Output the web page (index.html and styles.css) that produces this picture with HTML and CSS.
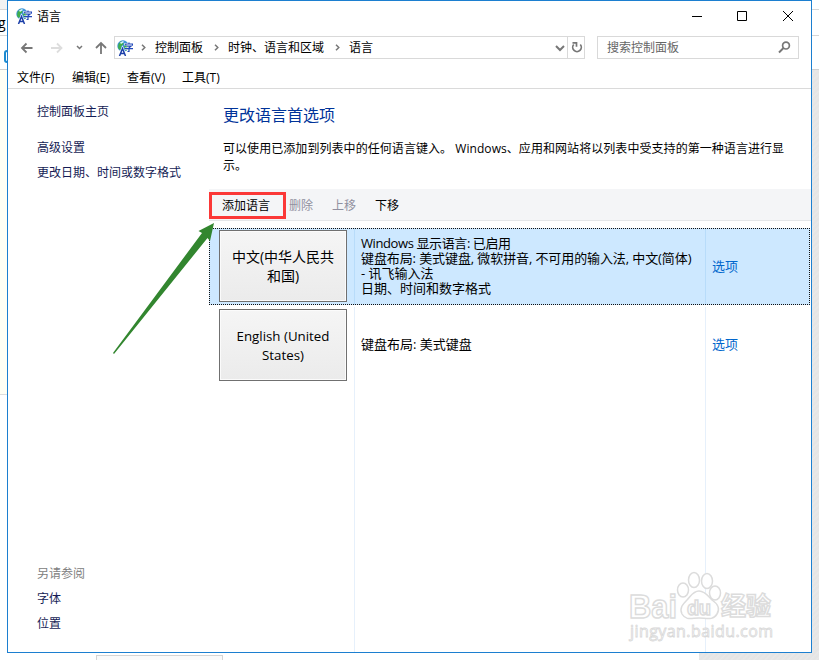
FILE: index.html
```
<!DOCTYPE html>
<html lang="zh-CN">
<head>
<meta charset="utf-8">
<title>语言</title>
<link rel="stylesheet" href="styles.css">
</head>
<body>
<svg width="0" height="0" class="defs">
<symbol id="lang" viewBox="0 0 16 16">
<circle cx="6" cy="6" r="5.700" fill="#3c93d8"/>
<path d="M1.500 4 4 1.200 6.500 3 6 5 4 6l.5 3L3 10 1 8zM7 6l3-2 1 5-2 2z" fill="#3fae4c"/>
<path d="M3 2.500 6 1l1 1-3 2z" fill="#d8f3ff"/>
<path d="M2.500 15.500 5.500 8.500l3 7M3.500 13h4" fill="none" stroke="#fff" stroke-width="2.600"/>
<path d="M2.500 16 5.500 8.500l3 7.500M3.500 13.500h4" fill="none" stroke="#1a3ea8" stroke-width="1.500"/>
<path d="M8.500 5.500V4h7v1.500M12 2.500V4M9.800 6.200h4.200L12 7.800V11.500h-1.500M8 8.600h8" fill="none" stroke="#fff" stroke-width="2.200"/>
<path d="M8.700 5.500V4h6.800v1.500M12 2.500V4M9.800 6.200h4.200L12 7.800V11.500h-1.500M8 8.600h8" fill="none" stroke="#2148b9" stroke-width="1.200"/>
</symbol>
<symbol id="sep" viewBox="0 0 5 7"><path d="M1 .7 3.800 3.500 1 6.300" fill="none" stroke="#777" stroke-width="1.500"/></symbol>
</svg>
<div class="behind">
<div class="behind-left"><div class="b-tab"></div><div class="b-addr">g</div><div class="b-tools"><i></i></div><div class="b-page"></div></div>
<div class="behind-right"><div class="b-tab"></div><div class="b-addr"></div><div class="b-tools"></div><div class="b-grain"></div></div>
<div class="behind-bottom"><div class="b-box"></div><div class="b-grain"></div></div>
</div>

<div class="window">
<div class="titlebar">
<svg class="lang"><use href="#lang"/></svg>
<span class="title">语言</span>
<svg class="controls" width="104" height="12" viewBox="0 0 104 12" fill="none" stroke="#000"><path d="M0 6.500h10M45.500 1.500h9v9h-9zM91 1l10 10M101 1 91 11"/></svg>
</div>

<div class="navbar">
<svg class="arrows" width="90" height="16" viewBox="0 0 90 16" fill="none" stroke-width="1.800">
<path d="M13.500 8H3M7.500 3.500 3 8l4.500 4.500" stroke="#777"/>
<path d="M32 8h10.500M38 3.500 42.500 8 38 12.500" stroke="#ddd"/>
<path d="m58 6 2.500 2.500L63 6" stroke="#777" stroke-width="1.500"/>
<path d="M82 14V3M77 8l5-5 5 5" stroke="#777"/>
</svg>
<div class="address">
<svg class="lang"><use href="#lang"/></svg>
<svg class="sep"><use href="#sep"/></svg><span class="crumb c1">控制面板</span>
<svg class="sep"><use href="#sep"/></svg><span class="crumb c2">时钟、语言和区域</span>
<svg class="sep"><use href="#sep"/></svg><span class="crumb">语言</span>
<svg class="drop" width="10" height="8" viewBox="0 0 10 8"><path d="m1 2 4 4 4-4" fill="none" stroke="#777" stroke-width="2"/></svg>
<div class="refresh"><svg width="12" height="12" viewBox="0 0 12 12" fill="none" stroke="#777" stroke-width="1.700"><path d="M9.300 3.500A4.300 4.300 0 1 1 2.700 3.500M1.500 1.800h4v4"/></svg></div>
</div>
<div class="search">搜索控制面板<svg width="13" height="13" viewBox="0 0 13 13" fill="none" stroke="#777"><circle cx="8" cy="4.600" r="3.400" stroke-width="1.700"/><path d="M5.500 7 1 11.500" stroke-width="2"/></svg></div>
</div>

<div class="menubar"><span>文件(F)</span><span>编辑(E)</span><span>查看(V)</span><span>工具(T)</span></div>

<div class="body">
<div class="side">
<a class="home">控制面板主页</a>
<a>高级设置</a>
<a>更改日期、时间或数字格式</a>
<div class="also"><span>另请参阅</span><a>字体</a><a>位置</a></div>
</div>

<div class="main">
<h1>更改语言首选项</h1>
<p>可以使用已添加到列表中的任何语言键入。 Windows、应用和网站将以列表中受支持的第一种语言进行显示。</p>
<div class="toolbar"><span class="add">添加语言</span><span class="off del">删除</span><span class="off up">上移</span><span>下移</span></div>

<div class="list">
<div class="row selected">
<div class="name"><div class="tile">中文(中华人民共<br>和国)</div></div>
<div class="info"><div class="status">Windows 显示语言: 已启用</div><div class="layouts">键盘布局: 美式键盘, 微软拼音, 不可用的输入法, 中文(简体)</div><div>- 讯飞输入法</div><div>日期、时间和数字格式</div></div>
<div class="opt"><a>选项</a></div>
</div>
<div class="row">
<div class="name"><div class="tile en">English (United<br>States)</div></div>
<div class="info">键盘布局: 美式键盘</div>
<div class="opt"><a>选项</a></div>
</div>
<div class="row rest"><div class="name"></div><div class="info"></div><div class="opt"></div></div>
</div>
</div>
</div>
</div>

<div class="mark"></div>
<svg class="pointer" width="102" height="132" viewBox="0 0 102 132"><path d="M101 0 97 18 94.500 15 1 131 0 130 89 10 85.500 8z" fill="#32862f"/></svg>
<svg class="watermark" width="160" height="84" viewBox="0 0 160 84">
<g fill="#fff" stroke="#dcdcdc" stroke-width="1.500">
<text class="wm-bai" x="7" y="49" textLength="48" lengthAdjust="spacingAndGlyphs">Bai</text>
<ellipse cx="61" cy="21" rx="5.500" ry="7"/><ellipse cx="72" cy="11" rx="5.500" ry="7.500"/><ellipse cx="85" cy="12" rx="5.500" ry="7.500"/><ellipse cx="93" cy="24" rx="5.500" ry="7"/>
<path d="M77 22c6 0 9 5 13 9 6 4 8 9 5 14-4 7-11 4-18 4s-13 3-17-4c-3-6 1-10 5-14s6-9 12-9z"/>
<text class="wm-du" x="65" y="46" textLength="24">du</text>
<text class="wm-cn" x="99" y="46" textLength="50">经验</text>
</g>
<text class="wm-url" x="8" y="68" textLength="143">jingyan.baidu.com</text>
</svg>
</body>
</html>
```
FILE: styles.css
```
*{box-sizing:border-box}
body{margin:0;width:819px;height:660px;overflow:hidden;position:relative;background:#fff;color:#000;
font:12px/16px "Open Sans","Noto Sans CJK SC",sans-serif}
svg{display:block;flex:none}
.defs{position:absolute}

/* page behind the window */
.behind{position:absolute;top:0;left:0;width:819px;height:660px}
.behind-left{position:absolute;top:0;left:0;width:7px;height:653px}
.behind-right{position:absolute;top:0;right:0;width:7px;height:653px;display:flex;flex-direction:column}
.behind-right .b-grain{flex:1}
.behind-bottom{position:absolute;left:0;bottom:0;width:819px;height:7px;display:flex;justify-content:space-between;padding-left:96px}
.behind-bottom .b-grain{width:120px}
.b-tab{height:10px;border-bottom:1px solid #d6d6d6}
.behind-left .b-tab{background:#f2f2f2;border-bottom:0;height:9px}
.b-addr{height:26px;border-bottom:1px solid #d6d6d6;font-size:14px;line-height:25px;overflow:hidden;text-indent:-2px}
.behind-left .b-addr{border-top:1px solid #d6d6d6;height:27px}
.b-tools{height:34px;border-bottom:1px solid #d0d0d0;padding:14px 0 0 4px}
.b-tools i{display:block;width:6px;height:13px;border:2px solid #1c8ad0;border-radius:3px}
.b-page{height:325px;background:#fffff5;border-bottom:1px solid #ddd}
.b-grain{background:repeating-linear-gradient(135deg,#e7e7e7 0,#e4e4e4 2px,#e9e9e9 4px)}
.b-box{width:127px;margin-top:2px;border:1px solid #d4d4d4;border-bottom:0;background:#fafafa}

.window{position:relative;width:805px;height:653px;margin-left:7px;border:1px solid #1c7fd0;background:#fff;display:flex;flex-direction:column}
.lang{width:16px;height:16px}
.titlebar{height:30px;display:flex;align-items:center;padding:0 15px 1px 8px}
.title{margin:2px 0 0 5px}
.controls{margin-left:auto;margin-top:1px}

.navbar{height:33px;padding:5px 12px 5px 11px;display:flex}
.arrows{margin:4px 5px 0 0}
.address{width:471px;height:23px;border:1px solid #d9d9d9;display:flex;align-items:center;padding-left:2px;line-height:20px}
.sep{width:5px;height:7px;margin-left:7px}
.crumb{margin-left:9px}
.address .lang{margin-right:1px}
.c1,.c2{margin-right:4px}
.drop{margin-left:auto;margin-right:2px}
.refresh{width:17px;height:21px;border-left:1px solid #d9d9d9;padding:4px 0 0 3px}
.search{width:202px;height:23px;margin-left:12px;border:1px solid #d9d9d9;padding:0 7px 0 9px;display:flex;align-items:center;justify-content:space-between;color:#666}

.menubar{height:25px;border-bottom:1px solid #dadada;display:flex;gap:16px;padding:6px 0 0 9px}
.menubar span{width:39px;white-space:nowrap}

.body{flex:1;display:flex;min-height:0}
.side{width:201px;padding:15px 0 16px 29px;display:flex;flex-direction:column;color:#151c55}
.side a{height:25px;white-space:nowrap}
.side .home{height:36px}
.also{margin-top:auto;display:flex;flex-direction:column}
.also span{height:25px;color:#808080}
.also a:last-child{height:20px}

.main{width:602px;display:flex;flex-direction:column}
h1{margin:15px 0 0 14px;font-size:16px;line-height:22px;font-weight:normal;color:#003399}
p{margin:14px 20px 0 14px;height:49px;line-height:17px;letter-spacing:.06px}
.toolbar{height:32px;background:#f4f5f7;border-bottom:1px solid #e4e6e9;display:flex;padding:9px 0 0 13px}
.add{width:67px}
.off{color:#9090a0}
.del,.up{width:43px}

.list{flex:1;display:flex;flex-direction:column;padding-top:7px;font-size:13px}
.row{height:77px;display:flex;width:602px}
.selected{background:#cde8ff;outline:1px dotted #111;outline-offset:-1px;width:601px}
.name{width:146px;border-right:1px solid #e6f0fb;padding:2px 0 0 10px}
.info{width:351px;border-right:1px solid #e6f0fb;padding:0 0 2px 6px;line-height:15px;align-content:center;white-space:nowrap}
.status{letter-spacing:-.4px}
.layouts{letter-spacing:-.1px}
.opt{align-content:center;padding:0 0 2px 6px}
.opt a{color:#0066cc}
.selected .name,.selected .info{border-color:#b8dcfa}
.row:nth-child(2){padding-top:2px;height:78px}
.tile{width:128px;height:72px;border:1px solid #707070;box-shadow:inset 0 0 0 1px #fbfbfb;background:linear-gradient(#f5f5f5,#ebebeb);text-align:center;font-size:14px;line-height:19px;padding-top:16px}
.en{font-size:13.3px;padding-top:17px}
.rest{flex:1}

/* notes drawn over the window */
.mark{position:absolute;left:209px;top:192px;width:77px;height:27px;border:3px solid #fb3837}
.pointer{position:absolute;left:113px;top:223px}
.watermark{position:absolute;left:622px;top:569px}
.wm-bai{font:bold 34px "Liberation Sans",sans-serif}
.wm-du{font:bold 20px "Liberation Sans",sans-serif}
.wm-cn{font:bold 25px "Noto Sans CJK SC",sans-serif}
.wm-url{font:16px "Open Sans",sans-serif;fill:#fff;stroke:#d8d8d8;stroke-width:.8px}
```
